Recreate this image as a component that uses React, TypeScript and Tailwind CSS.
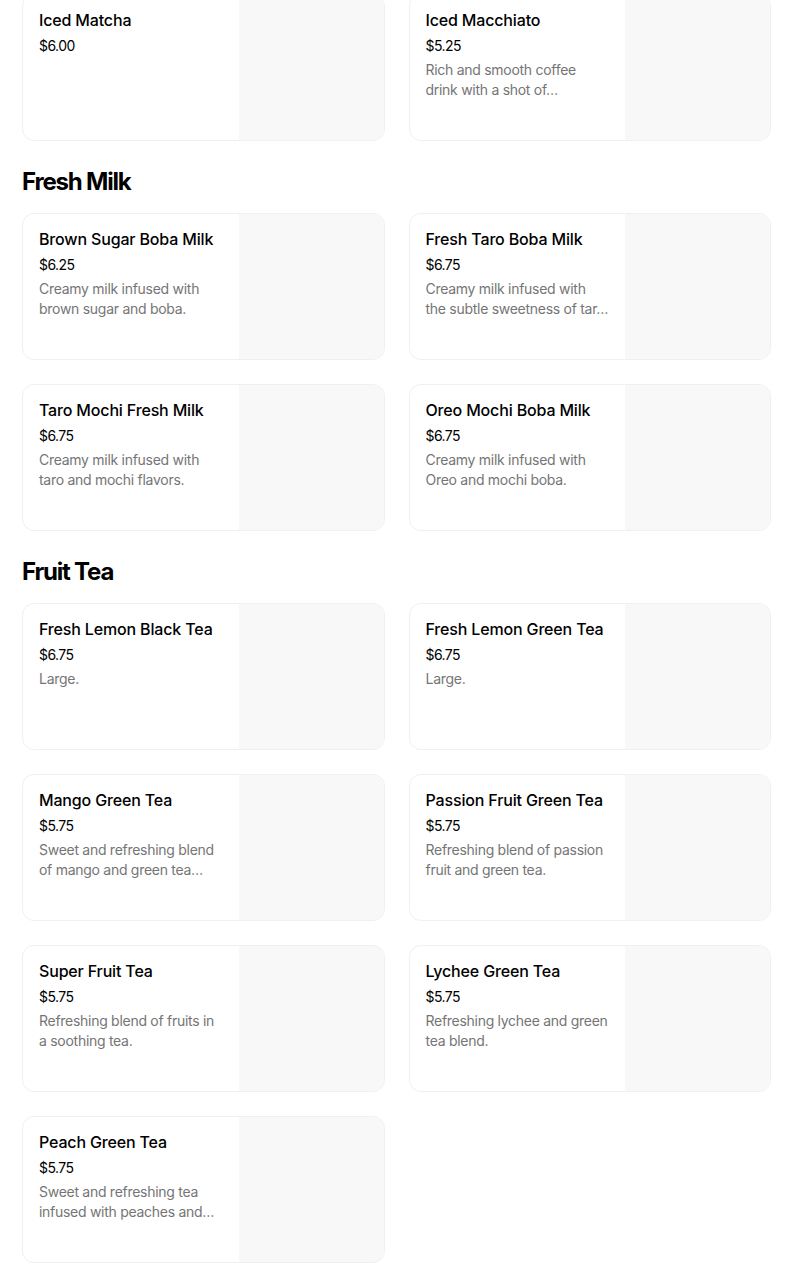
type Item = { name: string; price: string; desc?: string };

// descriptions are stored already shortened, the way the menu shows them
const sections: { title?: string; items: Item[] }[] = [
  {
    items: [
      { name: "Iced Matcha", price: "$6.00" },
      { name: "Iced Macchiato", price: "$5.25", desc: "Rich and smooth coffee drink with a shot of…" },
    ],
  },
  {
    title: "Fresh Milk",
    items: [
      { name: "Brown Sugar Boba Milk", price: "$6.25", desc: "Creamy milk infused with brown sugar and boba." },
      { name: "Fresh Taro Boba Milk", price: "$6.75", desc: "Creamy milk infused with the subtle sweetness of tar…" },
      { name: "Taro Mochi Fresh Milk", price: "$6.75", desc: "Creamy milk infused with taro and mochi flavors." },
      { name: "Oreo Mochi Boba Milk", price: "$6.75", desc: "Creamy milk infused with Oreo and mochi boba." },
    ],
  },
  {
    title: "Fruit Tea",
    items: [
      { name: "Fresh Lemon Black Tea", price: "$6.75", desc: "Large." },
      { name: "Fresh Lemon Green Tea", price: "$6.75", desc: "Large." },
      { name: "Mango Green Tea", price: "$5.75", desc: "Sweet and refreshing blend of mango and green tea…" },
      { name: "Passion Fruit Green Tea", price: "$5.75", desc: "Refreshing blend of passion fruit and green tea." },
      { name: "Super Fruit Tea", price: "$5.75", desc: "Refreshing blend of fruits in a soothing tea." },
      { name: "Lychee Green Tea", price: "$5.75", desc: "Refreshing lychee and green tea blend." },
      { name: "Peach Green Tea", price: "$5.75", desc: "Sweet and refreshing tea infused with peaches and…" },
    ],
  },
];

function Card({ item }: { item: Item }) {
  return (
    <div className="flex h-[147px] overflow-hidden rounded-[12px] border border-[#f0f0f0] bg-white">
      <div className="flex min-w-0 flex-1 flex-col pt-[15px] pb-4 pl-4 pr-4">
        <p className="text-[16px] leading-5 font-medium tracking-[-0.01em] text-black">{item.name}</p>
        <p className="mt-[6px] text-[14px] leading-5 tracking-[-0.04em] text-black">{item.price}</p>
        {item.desc && (
          <p className="mt-1 text-[14px] leading-5 tracking-[-0.02em] text-[#757575]">{item.desc}</p>
        )}
      </div>
      <div className="h-full w-[145px] shrink-0 bg-[#f8f8f8]" />
    </div>
  );
}

export default function App() {
  return (
    <div className="bg-white pb-[15px] pl-[22px] pr-[33px]" style={{ fontFamily: "Inter, 'Noto Sans', sans-serif" }}>
      <div className="-mt-[6px]">
        {sections.map((s, i) => (
          <div key={i}>
            {s.title && (
              <h2 className="mt-[25px] mb-[15px] text-[24px] leading-8 font-bold tracking-[-0.05em] text-black">
                {s.title}
              </h2>
            )}
            <div className="grid grid-cols-2 gap-x-6 gap-y-6">
              {s.items.map((it) => (
                <Card key={it.name} item={it} />
              ))}
            </div>
          </div>
        ))}
      </div>
    </div>
  );
}
